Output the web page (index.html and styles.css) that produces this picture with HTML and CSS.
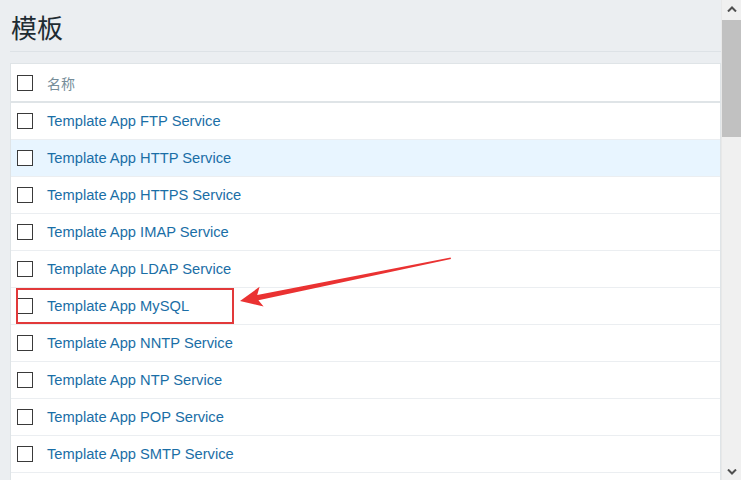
FILE: index.html
```html
<!DOCTYPE html>
<html lang="zh">
<head>
<meta charset="utf-8">
<title>模板</title>
<link rel="stylesheet" href="styles.css">
</head>
<body>
<div class="layout">
  <main class="main">
    <header class="page-header">
      <h1 class="title">模板</h1>
    </header>
    <div class="table">
      <div class="row head">
        <span class="check"></span>
        <span class="col-name">名称</span>
      </div>
      <div class="row"><span class="check"></span><a class="link">Template App FTP Service</a></div>
      <div class="row hover"><span class="check"></span><a class="link">Template App HTTP Service</a></div>
      <div class="row"><span class="check"></span><a class="link">Template App HTTPS Service</a></div>
      <div class="row"><span class="check"></span><a class="link">Template App IMAP Service</a></div>
      <div class="row"><span class="check"></span><a class="link">Template App LDAP Service</a></div>
      <div class="row"><span class="check"></span><a class="link">Template App MySQL</a></div>
      <div class="row"><span class="check"></span><a class="link">Template App NNTP Service</a></div>
      <div class="row"><span class="check"></span><a class="link">Template App NTP Service</a></div>
      <div class="row"><span class="check"></span><a class="link">Template App POP Service</a></div>
      <div class="row"><span class="check"></span><a class="link">Template App SMTP Service</a></div>
    </div>
    <svg class="annotation" width="721" height="480" viewBox="0 0 721 480">
      <rect x="17" y="289" width="216" height="34" fill="none" stroke="#e2393a" stroke-width="2"/>
      <polygon fill="#ea3232" points="240,301 263.6,306.4 258.4,300.2 451,258.9 450.6,257.5 257.2,295 259.6,286.8"/>
    </svg>
  </main>
  <aside class="scrollbar">
    <div class="sb-btn">
      <svg width="10" height="6" viewBox="0 0 10 6"><path d="M1 5.5 L5 1.5 L9 5.5" fill="none" stroke="#505050" stroke-width="2"/></svg>
    </div>
    <div class="sb-track"><div class="sb-thumb"></div></div>
    <div class="sb-btn">
      <svg width="10" height="6" viewBox="0 0 10 6"><path d="M1 0.5 L5 4.5 L9 0.5" fill="none" stroke="#505050" stroke-width="2"/></svg>
    </div>
  </aside>
</div>
</body>
</html>
```
FILE: styles.css
```css
html, body {
  margin: 0;
  padding: 0;
  height: 100%;
  overflow: hidden;
}
body {
  background: #ebeef1;
  font-family: Arial, "Liberation Sans", "Noto Sans CJK SC", sans-serif;
  font-size: 14px;
}
.layout {
  display: flex;
  height: 480px;
}
.main {
  position: relative;
  flex: 1;
  padding-left: 10px;
  overflow: hidden;
}
.page-header {
  height: 52px;
  border-bottom: 1px solid #dde2e6;
  margin-bottom: 11px;
  box-sizing: border-box;
  padding-top: 12px;
}
.title {
  margin: 0 0 0 1px;
  font-family: "Noto Sans CJK SC", sans-serif;
  font-size: 26px;
  line-height: 30px;
  font-weight: normal;
  color: #1f2c33;
}
.table {
  background: #fff;
  border: 1px solid #dfe4e7;
  min-height: 520px;
}
.row {
  display: flex;
  align-items: center;
  height: 36px;
  padding-left: 6px;
  border-bottom: 1px solid #ebeef1;
}
.row.head {
  height: 37px;
  border-bottom: 2px solid #dfe4e7;
}
.row.hover {
  background: #e8f5ff;
}
.check {
  width: 14px;
  height: 14px;
  border: 1px solid #3a3a3a;
  background: #fff;
  margin-right: 14px;
  flex: none;
}
.col-name {
  font-family: "Noto Sans CJK SC", sans-serif;
  color: #768d99;
  font-size: 14px;
}
.link {
  color: #1a6ea6;
  font-family: Arial, "Liberation Sans", sans-serif;
  font-size: 14.7px;
}
.annotation {
  position: absolute;
  left: 0;
  top: 0;
  pointer-events: none;
}
.scrollbar {
  width: 20px;
  flex: none;
  display: flex;
  flex-direction: column;
  background: #f0f0f0;
  border-left: 1px solid #e8e8e8;
  box-sizing: border-box;
}
.sb-btn {
  height: 17px;
  display: flex;
  align-items: center;
  justify-content: center;
}
.sb-track {
  flex: 1;
  padding-top: 3px;
}
.sb-thumb {
  height: 117px;
  background: #c1c1c1;
}
```
